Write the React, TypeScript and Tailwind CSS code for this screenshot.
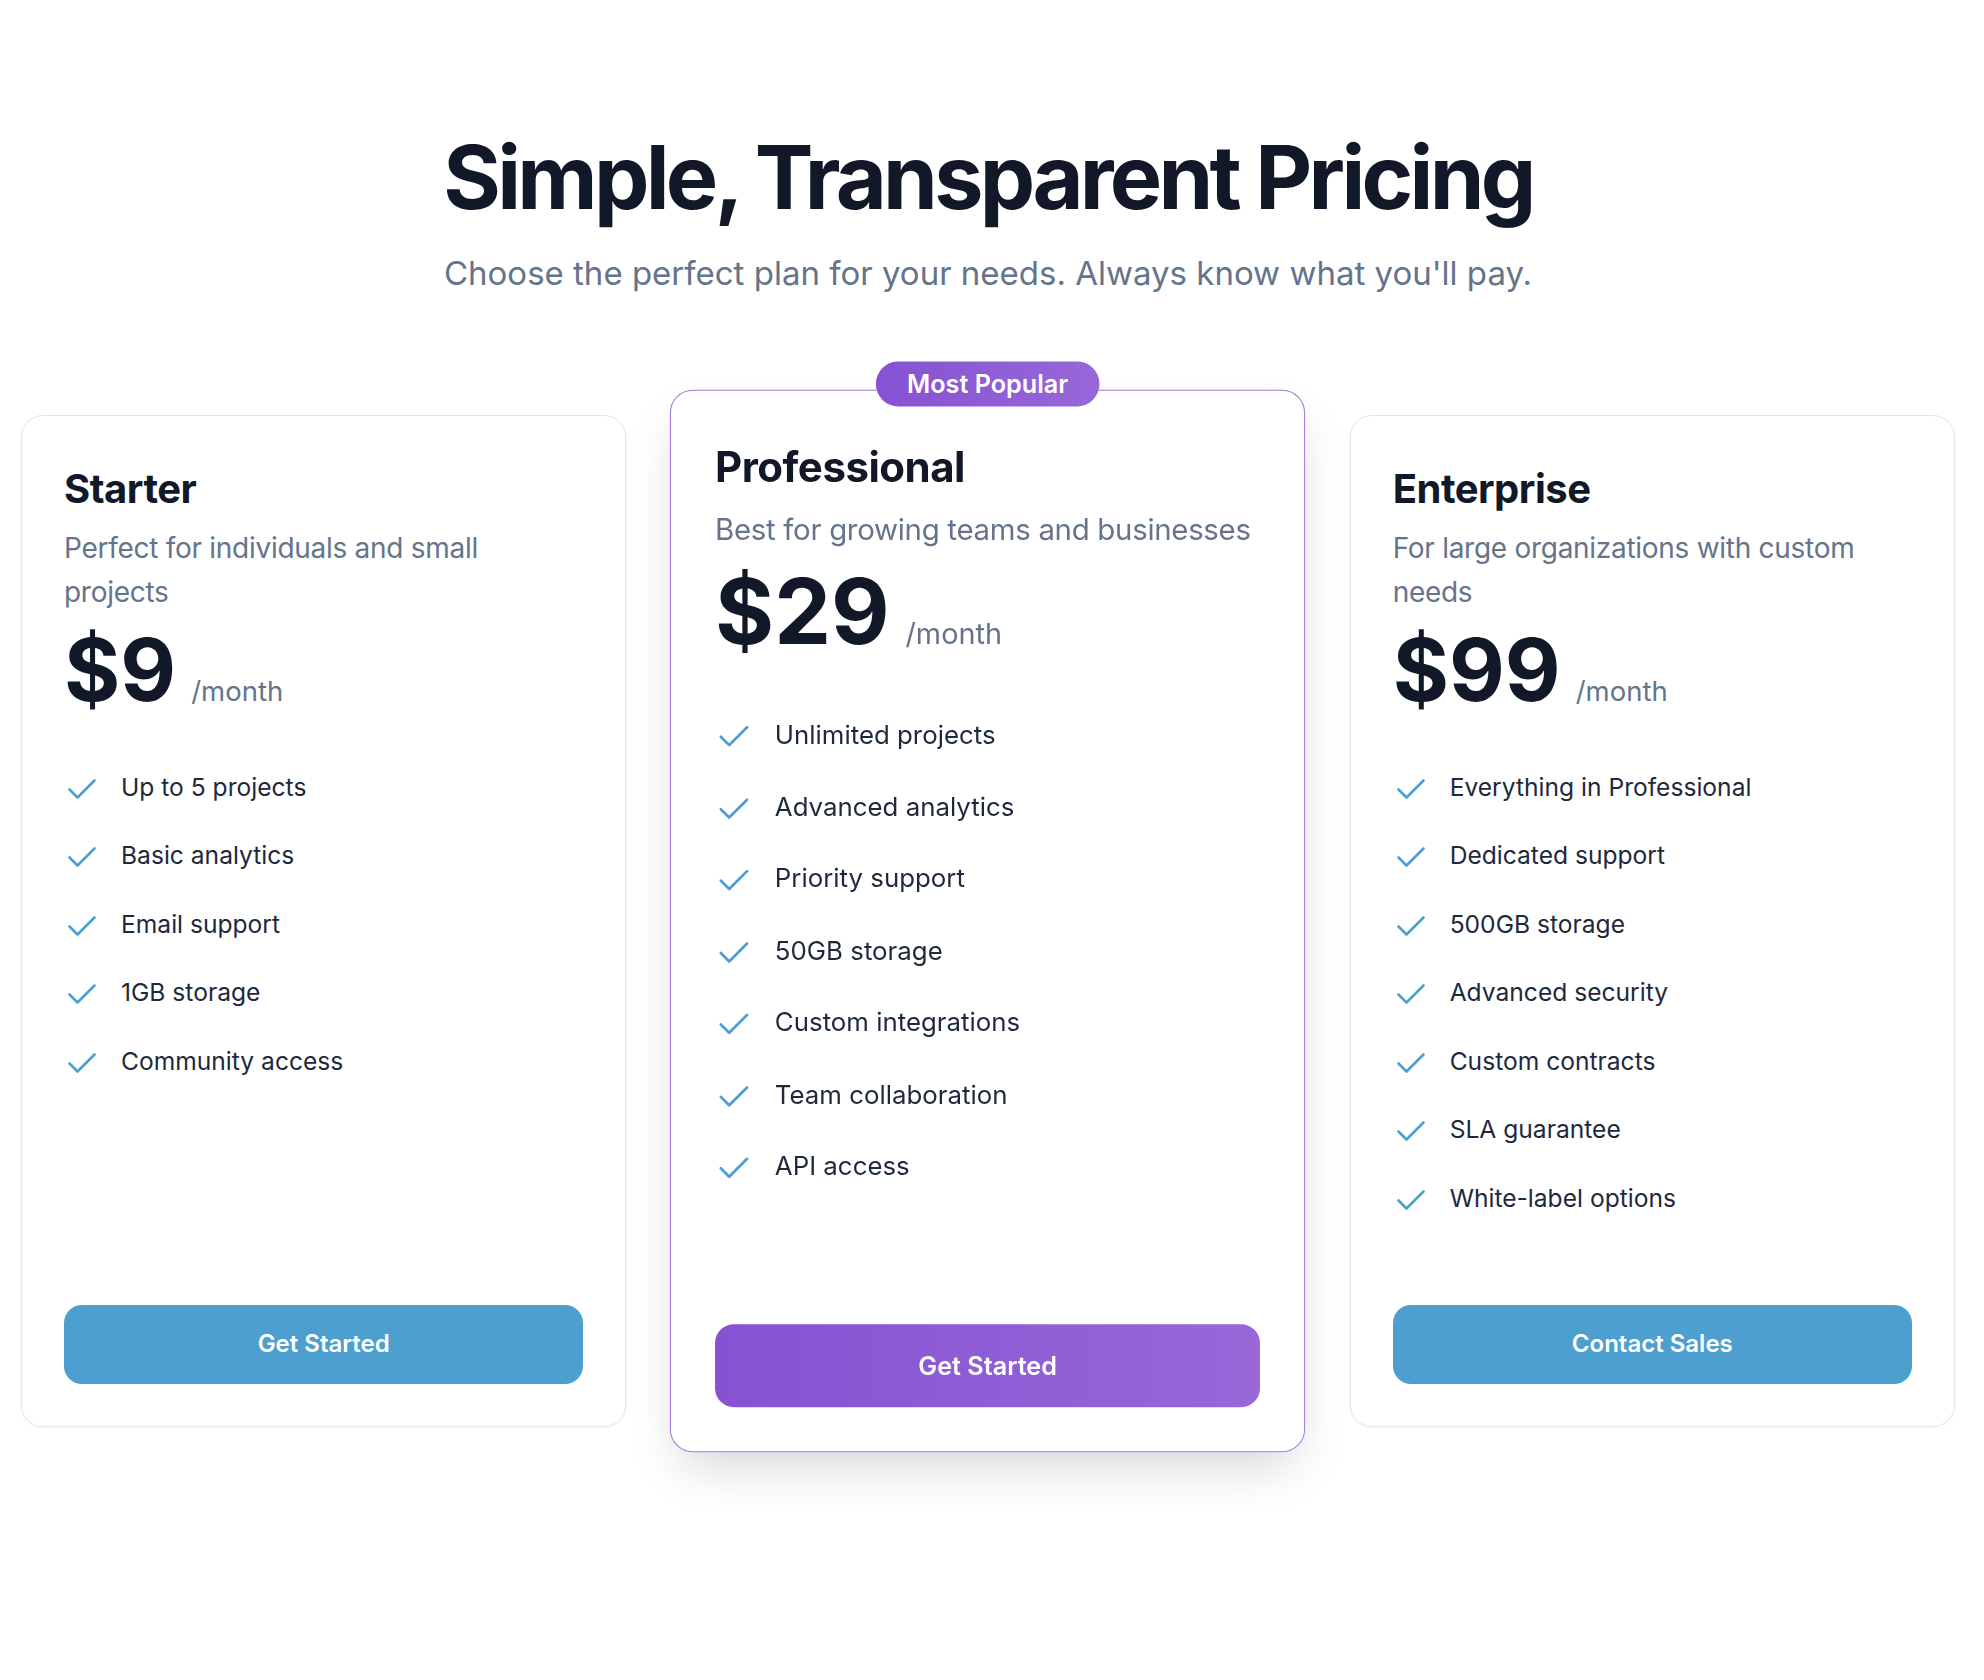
import React from 'react';

type Plan = {
  name: string;
  desc: string;
  price: string;
  features: string[];
  cta: string;
  popular?: boolean;
};

const plans: Plan[] = [
  {
    name: 'Starter',
    desc: 'Perfect for individuals and small projects',
    price: '$9',
    features: ['Up to 5 projects', 'Basic analytics', 'Email support', '1GB storage', 'Community access'],
    cta: 'Get Started',
  },
  {
    name: 'Professional',
    desc: 'Best for growing teams and businesses',
    price: '$29',
    features: ['Unlimited projects', 'Advanced analytics', 'Priority support', '50GB storage', 'Custom integrations', 'Team collaboration', 'API access'],
    cta: 'Get Started',
    popular: true,
  },
  {
    name: 'Enterprise',
    desc: 'For large organizations with custom needs',
    price: '$99',
    features: ['Everything in Professional', 'Dedicated support', '500GB storage', 'Advanced security', 'Custom contracts', 'SLA guarantee', 'White-label options'],
    cta: 'Contact Sales',
  },
];

function CheckIcon() {
  return (
    <svg width="33" height="30" viewBox="0 0 33 30" fill="none" className="shrink-0">
      <polyline points="5.5,17.5 13.5,25.5 30.5,8.5" stroke="#4c9fd0" strokeWidth="2.6" strokeLinecap="round" strokeLinejoin="round" />
    </svg>
  );
}

function PlanCard({ plan }: { plan: Plan }) {
  return (
    <div
      className={`relative flex flex-col rounded-[22px] border bg-white p-[42px] ${
        plan.popular
          ? 'z-10 scale-105 border-[#a47ae0] shadow-[0_22px_50px_-12px_rgba(0,0,0,0.18)]'
          : 'border-[#e3e6ee] shadow-[0_1px_3px_rgba(0,0,0,0.05)]'
      }`}
    >
      {plan.popular && (
        <div className="absolute -top-[28px] left-1/2 flex h-[43px] -translate-x-1/2 items-center rounded-full bg-linear-to-r from-[#8652d2] to-[#9867d8] px-[30px] text-[24px] font-semibold text-white whitespace-nowrap">
          Most Popular
        </div>
      )}
      <h3 className="text-[40px] font-bold leading-[62px] tracking-[-0.012em] text-[#111827]">{plan.name}</h3>
      <p className="mt-[6px] text-[28px] leading-[44px] tracking-[-0.01em] text-[#64748b]">{plan.desc}</p>
      <div className="mt-[13px] flex items-baseline">
        <span className="text-[86px] font-bold leading-none text-[#111827]">{plan.price}</span>
        <span className="ml-[15px] text-[27.5px] text-[#64748b]">/month</span>
      </div>
      <ul className="mt-[56px] mb-[89px] flex flex-1 flex-col gap-[32.5px]">
        {plan.features.map(f => (
          <li key={f} className="flex h-[36px] items-center">
            <CheckIcon />
            <span className="ml-[24px] text-[24.6px] leading-[36px] text-[#1e293b]">{f}</span>
          </li>
        ))}
      </ul>
      <button
        className={`h-[79px] w-full rounded-[18px] text-[24px] font-semibold text-white ${
          plan.popular ? 'bg-linear-to-r from-[#8652d2] to-[#9867d8]' : 'bg-[#4c9fce]'
        }`}
      >
        {plan.cta}
      </button>
    </div>
  );
}

export default function App() {
  return (
    <div className="min-h-screen bg-white pr-[8px] font-[Inter,sans-serif]">
      {/* Header */}
      <div className="pt-[133px] text-center">
        <h1 className="text-[88px] font-bold leading-none tracking-[-0.042em] text-[#111827]">Simple, Transparent Pricing</h1>
        <p className="mt-[28px] text-[33px] leading-[49.5px] text-[#64748b]">Choose the perfect plan for your needs. Always know what you'll pay.</p>
      </div>

      {/* Cards */}
      <div className="mt-[116px] grid grid-cols-3 gap-[59px] px-[21px]">
        {plans.map(p => (
          <PlanCard key={p.name} plan={p} />
        ))}
      </div>
    </div>
  );
}
